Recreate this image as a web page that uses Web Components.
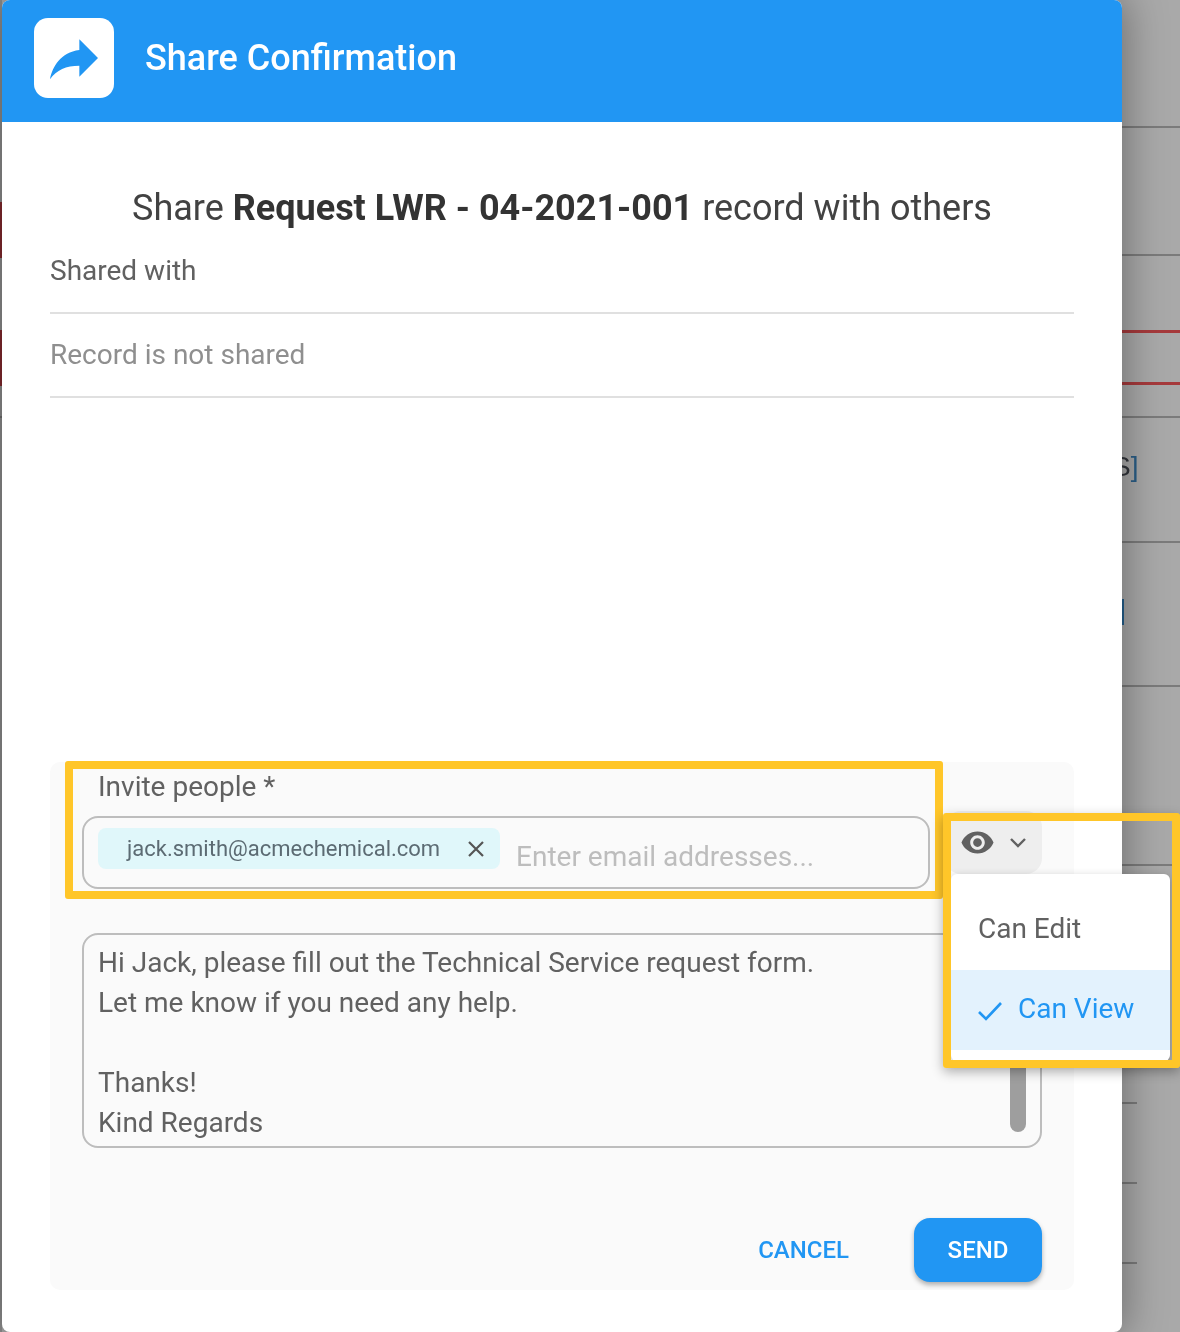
<!DOCTYPE html>
<html lang="en">
<head>
<meta charset="utf-8">
<title>Share Confirmation</title>
<style>
    html, body { margin: 0; padding: 0; height: 1332px; overflow: hidden; }
    body { font-family: Roboto, "Liberation Sans", sans-serif; background: #a9a9a9; filter: blur(.4px); }
</style>
</head>
<body>
<page-backdrop></page-backdrop>
<share-dialog>
    <span slot="title">Share Confirmation</span>
    <share-heading>Share <b>Request LWR - 04-2021-001</b> record with others</share-heading>
    <shared-row first>Shared with</shared-row>
    <shared-row muted>Record is not shared</shared-row>
    <invite-form></invite-form>
</share-dialog>

<script>
function tpl(html) {
    const t = document.createElement("template");
    t.innerHTML = html;
    return t;
}

function define(name, html) {
    const template = tpl(html);
    customElements.define(name, class extends HTMLElement {
        constructor() {
            super();
            this.attachShadow({ mode: "open" }).appendChild(template.content.cloneNode(true));
        }
    });
}

// greyed out page behind the modal, only its edges are visible
define("page-backdrop", `
    <style>
        :host { display: flex; width: 1180px; height: 1332px; background: #a9a9a9; overflow: hidden; }
        .left { width: 2px; flex: none; background: #8e8e8e; display: flex; flex-direction: column; }
        .left i { display: block; background: #84292e; height: 56px; }
        .left .gap1 { height: 202px; background: none; }
        .left .gap2 { height: 72px; background: none; }
        .left .gap3 { height: 30px; background: none; border-bottom: 2px solid #6f6f6f; }
        .mid { width: 1120px; flex: none; }
        .right { flex: 1; display: flex; flex-direction: column; }
        .row { border-bottom: 2px solid #7b7b7b; flex: none; box-sizing: border-box; }
        .red { border-bottom: 3px solid #a63a3c; }
        .short { width: 15px; }
        .cell { font: 28px "Liberation Sans", sans-serif; color: #33363c; padding-top: 33px; margin-left: -10px; white-space: nowrap; }
        .cell span { color: #2a5d86; }
        .bar { width: 2px; height: 26px; background: #245f8c; margin-top: 56px; }
    </style>
    <div class="left">
        <i class="gap1"></i><i></i><i class="gap2"></i><i></i><i class="gap3"></i>
    </div>
    <div class="mid"></div>
    <div class="right">
        <div class="row" style="height:128px"></div>
        <div class="row" style="height:128px"></div>
        <div class="row red" style="height:77px"></div>
        <div class="row red" style="height:52px"></div>
        <div class="row" style="height:33px"></div>
        <div class="row" style="height:125px"><div class="cell">S<span>]</span></div></div>
        <div class="row" style="height:144px"><div class="bar"></div></div>
        <div class="row" style="height:179px"></div>
        <div class="row short" style="height:238px;"></div>
        <div class="row short" style="height:80px"></div>
        <div class="row short" style="height:80px"></div>
    </div>
`);

define("share-dialog", `
    <style>
        :host {
            display: block;
            position: absolute;
            left: 2px;
            top: 0;
            width: 1120px;
            height: 1332px;
            background: #fff;
            border-radius: 8px;
            box-shadow: 0 0 40px 4px rgba(0, 0, 0, .34);
        }
        header {
            box-sizing: border-box;
            height: 122px;
            background: #2196f3;
            border-radius: 8px 8px 0 0;
            display: flex;
            align-items: center;
            gap: 32px;
            padding-left: 32px;
            padding-bottom: 6px;
        }
        .tile {
            width: 80px;
            height: 80px;
            background: #fff;
            border-radius: 14px;
            display: flex;
            align-items: center;
            justify-content: center;
        }
        .title { color: #fff; font-size: 36px; font-weight: 500; margin-left: -1px; }
        main { padding: 66px 48px 0; }
    </style>
    <header>
        <div class="tile">
            <svg width="64" height="64" viewBox="0 0 24 24" fill="#2196f3">
                <path d="M14 9V5l7 7-7 7v-4.1c-5 0-8.5 1.6-11 5.1 1-5 4-10 11-11z"/>
            </svg>
        </div>
        <div class="title"><slot name="title"></slot></div>
    </header>
    <main><slot></slot></main>
`);

define("share-heading", `
    <style>
        :host { display: block; text-align: center; font-size: 36px; line-height: 40px; color: #424242; white-space: nowrap; }
        ::slotted(b) { font-weight: 700; color: #333; }
    </style>
    <slot></slot>
`);

customElements.define("shared-row", class extends HTMLElement {
    constructor() {
        super();
        const shadow = this.attachShadow({ mode: "open" });
        shadow.innerHTML = `
            <style>
                :host {
                    display: block;
                    font-size: 28px;
                    line-height: 40px;
                    color: #616161;
                    padding: 21px 0;
                    border-bottom: 2px solid #e0e0e0;
                }
                :host([first]) { padding-top: 23px; }
                :host([muted]) { color: #8f8f8f; }
            </style>
            <slot></slot>
        `;
    }
});

define("email-chip", `
    <style>
        :host {
            display: flex;
            align-items: center;
            justify-content: space-between;
            box-sizing: border-box;
            width: 402px;
            height: 41px;
            padding: 0 16px 0 29px;
            background: #e0f7fa;
            border-radius: 8px;
            font-size: 22px;
            color: #5c6b73;
            white-space: nowrap;
        }
        svg { display: block; }
    </style>
    <slot></slot>
    <svg width="16" height="16" viewBox="0 0 16 16" fill="none" stroke="#555" stroke-width="2.2"><path d="M1 1l14 14M15 1L1 15"/></svg>
`);

define("permission-button", `
    <style>
        :host {
            display: flex;
            align-items: center;
            box-sizing: border-box;
            width: 97px;
            height: 63px;
            background: #eeeeee;
            border-radius: 16px;
            padding: 0 0 0 15px;
            gap: 14px;
        }
        svg { display: block; flex: none; }
    </style>
    <svg width="35" height="35" viewBox="0 0 24 24" fill="#616161"><path d="M12 4.5C7 4.5 2.73 7.61 1 12c1.73 4.39 6 7.5 11 7.5s9.27-3.11 11-7.5c-1.73-4.39-6-7.5-11-7.5zM12 17c-2.76 0-5-2.24-5-5s2.24-5 5-5 5 2.24 5 5-2.24 5-5 5zm0-8c-1.66 0-3 1.34-3 3s1.34 3 3 3 3-1.34 3-3-1.34-3-3-3z"/></svg>
    <svg width="18" height="12" viewBox="0 0 18 12" fill="none" stroke="#616161" stroke-width="2.4"><path d="M2 2l7 7 7-7"/></svg>
`);

define("permission-menu", `
    <style>
        :host {
            display: block;
            position: absolute;
            left: 901px;
            top: 112px;
            width: 219px;
            height: 187px;
            box-sizing: border-box;
            padding-top: 16px;
            background: #fff;
            border-radius: 6px;
            box-shadow: 0 2px 8px rgba(0, 0, 0, .2);
            font-size: 28px;
            z-index: 1;
        }
        .item { box-sizing: border-box; height: 80px; display: flex; align-items: center; padding: 0 0 4px 27px; color: #616161; }
        .on { background: #e3f2fd; color: #2196f3; gap: 16px; }
        svg { display: block; margin-top: 6px; }
    </style>
    <div class="item">Can Edit</div>
    <div class="item on">
        <svg width="24" height="20" viewBox="0 0 24 20" fill="none" stroke="#2196f3" stroke-width="2.6"><path d="M1 11l7 7L23 2"/></svg>
        Can View
    </div>
`);

define("invite-form", `
    <style>
        :host {
            display: block;
            position: relative;
            box-sizing: border-box;
            height: 528px;
            margin-top: 364px;
            padding: 5px 32px 0;
            background: #fafafa;
            border-radius: 10px;
        }
        .label { font-size: 28px; line-height: 40px; color: #616161; padding-left: 16px; margin-bottom: 4px; }
        .invite { display: flex; align-items: flex-start; justify-content: space-between; }
        .input {
            box-sizing: border-box;
            width: 848px;
            height: 73px;
            margin-top: 5px;
            border: 2px solid #bdbdbd;
            border-radius: 16px;
            padding: 10px 14px 0;
            display: flex;
            gap: 16px;
        }
        .placeholder { font-size: 28px; line-height: 36px; padding-top: 11px; color: #bdbdbd; white-space: nowrap; }
        .message {
            box-sizing: border-box;
            height: 215px;
            margin-top: 44px;
            border: 2px solid #bdbdbd;
            border-radius: 16px;
            padding: 8px 14px 0;
            display: flex;
            justify-content: space-between;
            font-size: 28px;
            line-height: 40px;
            color: #616161;
            overflow: hidden;
        }
        .scrollbar {
            width: 16px;
            height: 100px;
            flex: none;
            align-self: flex-end;
            margin: 0 0 14px;
            background: #9e9e9e;
            border-radius: 8px;
        }
        .actions { display: flex; justify-content: flex-end; align-items: center; margin-top: 70px; gap: 65px; }
        .cancel { font-size: 24px; font-weight: 500; color: #2196f3; }
        .send {
            width: 128px;
            height: 64px;
            display: flex;
            align-items: center;
            justify-content: center;
            background: #2196f3;
            color: #fff;
            font-size: 24px;
            font-weight: 500;
            border-radius: 16px;
            box-shadow: 0 3px 5px rgba(0, 0, 0, .3);
        }
        .mark {
            position: absolute;
            box-sizing: border-box;
            border: 8px solid #ffc629;
            border-radius: 3px;
            z-index: 2;
        }
        .mark.a { left: 15px; top: -1px; width: 878px; height: 138px; }
        .mark.b { left: 893px; top: 51px; width: 237px; height: 255px; box-shadow: 0 4px 12px rgba(0, 0, 0, .3); }
    </style>
    <div class="label">Invite people *</div>
    <div class="invite">
        <div class="input">
            <email-chip>jack.smith@acmechemical.com</email-chip>
            <div class="placeholder">Enter email addresses...</div>
        </div>
        <permission-button></permission-button>
    </div>
    <div class="message">
        <div>Hi Jack, please fill out the Technical Service request form.<br>Let me know if you need any help.<br><br>Thanks!<br>Kind Regards</div>
        <div class="scrollbar"></div>
    </div>
    <div class="actions">
        <div class="cancel">CANCEL</div>
        <div class="send">SEND</div>
    </div>
    <permission-menu></permission-menu>
    <div class="mark a"></div>
    <div class="mark b"></div>
`);
</script>
</body>
</html>
